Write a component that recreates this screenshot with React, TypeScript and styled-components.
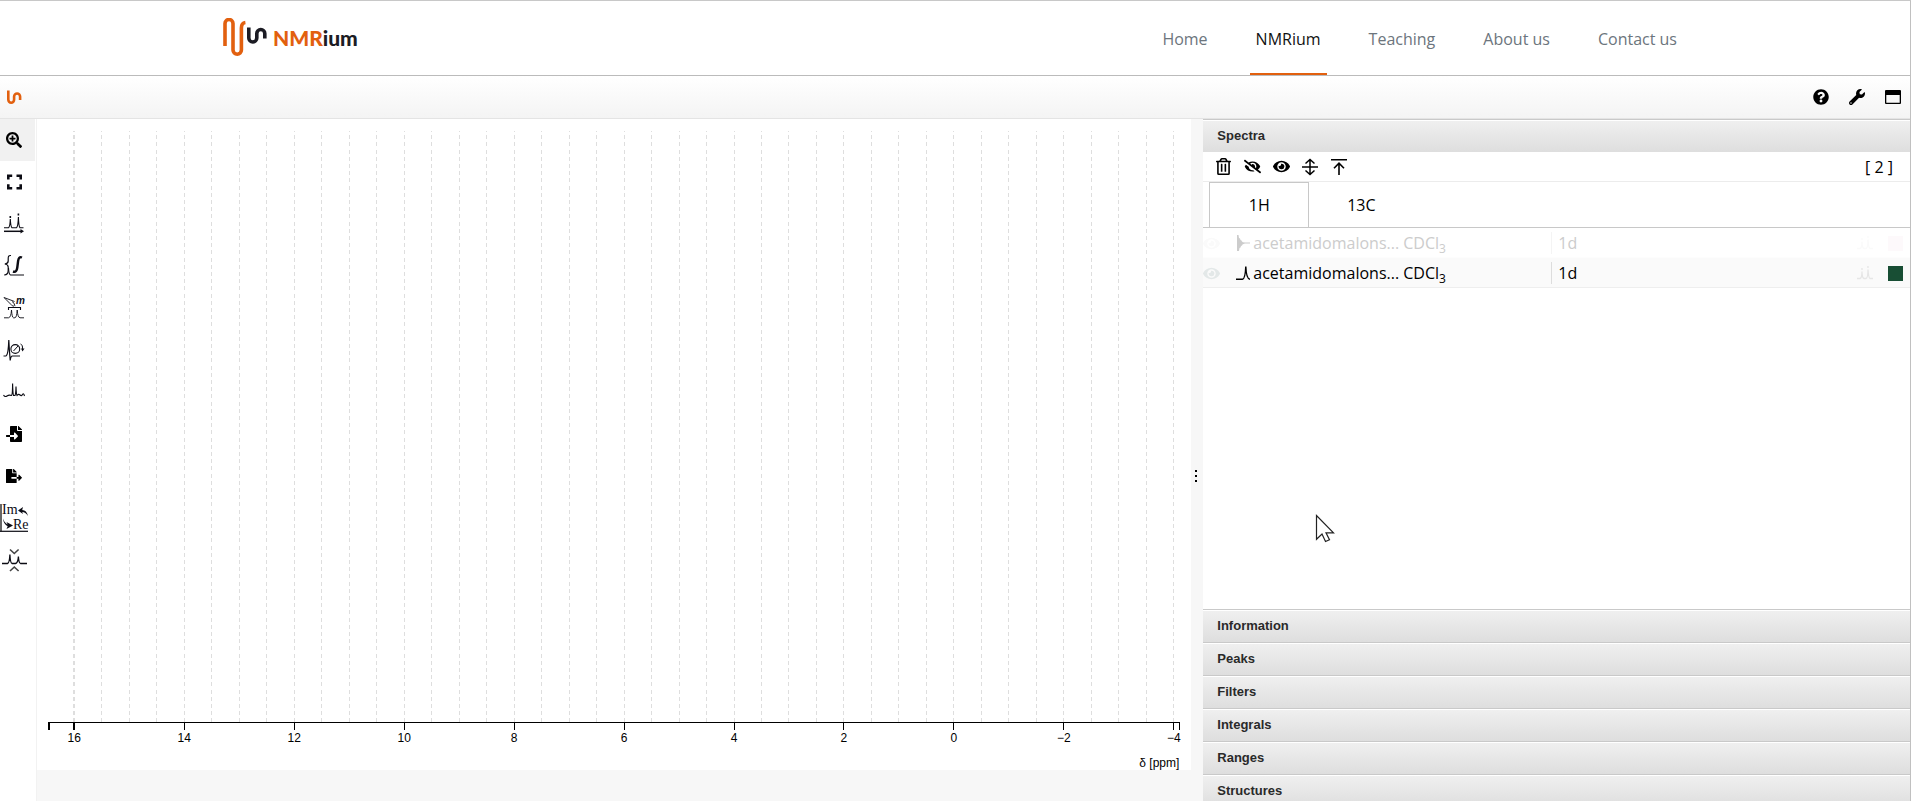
import React, { useState } from "react";
import styled, { createGlobalStyle, css } from "styled-components";
import {
  FaEye,
  FaEyeSlash,
  FaFileExport,
  FaFileImport,
  FaQuestionCircle,
  FaRegTrashAlt,
  FaSearchPlus,
  FaWrench,
} from "react-icons/fa";

const uiFont = `"Segoe UI", "Open Sans", "Noto Sans", sans-serif`;
const sansFont = `Arial, "Liberation Sans", sans-serif`;
const orange = "#e2600f";

const GlobalStyle = createGlobalStyle`
  *, *::before, *::after { box-sizing: border-box; }
  body { margin: 0; background: #fff; color: #000; font-family: ${uiFont}; font-size: 16px; }
  button { margin: 0; padding: 0; border: 0; background: none; color: inherit; font: inherit; cursor: pointer; }
  svg { display: block; }
`;

const Page = styled.div`
  display: flex;
  flex-direction: column;
  height: 100vh;
  overflow: hidden;
  border-top: 1px solid #c8c8c8;
  border-right: 1px solid #c0c0c0;
`;

/* ---------- site header ---------- */

const SiteHeader = styled.header`
  flex: none;
  height: 75px;
  border-bottom: 1px solid #bbb;
`;

const HeaderInner = styled.div`
  display: flex;
  justify-content: space-between;
  height: 100%;
  max-width: 1464px;
  margin: 0 auto;
  padding-right: 4px;
`;

const Brand = styled.a`
  display: flex;
  align-items: center;
  gap: 6px;
  color: #1c1c24;
  text-decoration: none;
`;

const BrandText = styled.span`
  font: 900 21px/24px Lato, sans-serif;
  b {
    font-weight: 900;
    color: ${orange};
  }
`;

const Nav = styled.nav`
  display: flex;
  gap: 36px;
`;

const NavLink = styled.a<{ $active?: boolean }>`
  display: flex;
  align-items: center;
  padding: 3px 6px 0;
  border-bottom: 2px solid ${(p) => (p.$active ? orange : "transparent")};
  color: ${(p) => (p.$active ? "#111" : "#6c757d")};
  text-decoration: none;
`;

/* ---------- application shell ---------- */

const AppBar = styled.div`
  flex: none;
  display: flex;
  align-items: center;
  justify-content: space-between;
  height: 43px;
  padding: 0 9px 0 6px;
  border-bottom: 1px solid #e4e4e4;
  background: linear-gradient(#fff, #f4f4f4);
`;

const BarActions = styled.div`
  display: flex;
  gap: 20px;
`;

const IconButton = styled.button<{ $size?: number }>`
  display: grid;
  place-items: center;
  width: ${(p) => p.$size ?? 16}px;
  height: ${(p) => p.$size ?? 16}px;
`;

const Workspace = styled.main`
  flex: 1;
  min-height: 0;
  display: grid;
  grid-template-columns: 37px minmax(0, 1fr) 12px 37%;
  background: #f7f7f7;
`;

const ToolColumn = styled.div`
  display: flex;
  flex-direction: column;
  background: #fff;
  border-right: 1px solid #f2f2f2;
`;

const ToolButton = styled.button<{ $active?: boolean }>`
  display: flex;
  align-items: center;
  width: 35px;
  height: 42px;
  background: ${(p) => (p.$active ? "#f1f1f1" : "transparent")};
`;

const ToolIcon = styled.span`
  display: grid;
  place-items: center;
  width: 28px;
  height: 28px;
`;

/* ---------- chart ---------- */

const Chart = styled.section`
  display: flex;
  flex-direction: column;
  margin-bottom: 31px;
  padding: 12px 12px 0;
  background: #fff;
`;

const Grid = styled.svg`
  flex: 1;
  width: 100%;
  min-height: 0;
  overflow: visible;
`;

const Axis = styled.svg`
  flex: none;
  width: 100%;
  height: 48px;
  overflow: visible;
  font: 12px ${sansFont};
`;

const Splitter = styled.div`
  display: flex;
  align-items: center;
  padding: 32px 0 0 3px;
`;

/* ---------- side panel ---------- */

const Panel = styled.aside`
  position: relative;
  display: flex;
  flex-direction: column;
  min-width: 0;
  overflow: hidden;
  background: #fff;
`;

const SectionHeader = styled.button`
  flex: none;
  height: 33px;
  padding: 0 14px;
  border-top: 1px solid #c9c9c9;
  box-shadow: inset 0 1px #fff;
  background: linear-gradient(#f0f0f0, #dedede);
  color: #2a2a2a;
  font: bold 13px/16px ${sansFont};
  text-align: left;
`;

const SectionBody = styled.div`
  flex: 1 0 auto;
  min-height: 457px;
`;

const PanelTools = styled.div`
  display: flex;
  align-items: center;
  justify-content: space-between;
  height: 30px;
  padding: 0 17px 0 11px;
  border-bottom: 1px solid #ececec;
`;

const ToolGroup = styled.div`
  display: flex;
  gap: 11px;
`;

const Tabs = styled.div`
  display: flex;
  height: 46px;
  padding-left: 6px;
  border-bottom: 1px solid #c8c8c8;
`;

const Tab = styled.button<{ $active: boolean }>`
  width: 100px;
  border: 1px solid transparent;
  border-bottom: 0;
  ${(p) =>
    p.$active &&
    css`
      border-color: #c8c8c8;
    `}
  & + & {
    margin-left: 2px;
  }
`;

const Table = styled.table`
  width: 100%;
  table-layout: fixed;
  border-collapse: collapse;
`;

const Row = styled.tr<{ $dim?: boolean }>`
  height: 30px;
  background: ${(p) => (p.$dim ? "#fff" : "#fafafa")};
  box-shadow: inset 0 -1px ${(p) => (p.$dim ? "#fdfdfd" : "#eee")};
  color: ${(p) => (p.$dim ? "#ccc" : "#000")};
`;

const Cell = styled.td`
  padding: 0;
  line-height: 22px;
  white-space: nowrap;
`;

const EyeButton = styled(IconButton)<{ $dim?: boolean }>`
  color: ${(p) => (p.$dim ? "#fafafa" : "#e3e8e8")};
`;

const NameContent = styled.div`
  display: flex;
  align-items: center;
  padding-left: 9px;
  gap: 3px;
  sub {
    font-size: 12px;
    line-height: 0;
  }
`;

const Kind = styled.div<{ $dim?: boolean }>`
  padding-left: 6px;
  border-left: 1px solid ${(p) => (p.$dim ? "#f4f4f4" : "#ddd")};
`;

const Swatch = styled.button<{ $color: string }>`
  display: block;
  width: 15px;
  height: 15px;
  background: ${(p) => p.$color};
`;

const Pointer = styled.svg`
  position: absolute;
  left: 112px;
  top: 395px;
  pointer-events: none;
`;

/* ---------- drawings ---------- */

const LogoMark = () => (
  <svg width="44" height="40" viewBox="0 0 44 40" fill="none" strokeWidth="3.6">
    <path
      stroke={orange}
      d="M2 28V5.500a4 4 0 0 1 8 0V32a4.200 4.200 0 0 0 8.400 0V10q0-5 4-5.500"
    />
    <path stroke="#1c1c24" d="M25.800 9.500V20a4 4 0 0 0 8 0v-4.500a4 4 0 0 1 8 0V20.500" />
  </svg>
);

const SmallMark = () => (
  <svg width="16" height="15" viewBox="0 0 16 15" fill="none" stroke={orange} strokeWidth="2.600">
    <path d="M2.300 .500v9a2.900 3.200 0 0 0 5.800 0V6.500a3 3 0 0 1 6 0V10" />
  </svg>
);

type DrawingProps = { children: React.ReactNode; w?: number };
const Drawing = ({ children, w = 1 }: DrawingProps) => (
  <svg width="28" height="28" viewBox="0 0 28 28" fill="none" stroke="#0c0c14" strokeWidth={w} overflow="visible">
    {children}
  </svg>
);

const FullscreenIcon = () => (
  <Drawing w={2.600}>
    <path d="M8.300 11.500V7.700H12.200M16.500 7.700h4.200V11.500M20.700 16.300v3.900H16.500M12.200 20.200H8.300v-3.900" />
  </Drawing>
);

const PeaksIcon = () => (
  <Drawing>
    <path d="M4 17.800H8.500Q10 17 10.300 9Q10.700 17 12 17.800H16.500Q18 17 18.400 7Q18.800 17 20 17.800H23.500" strokeWidth="1.100" />
    <path d="M10.300 6v2M18.400 3.500v2" strokeWidth="1.600" />
    <path d="M4 21.300H22" strokeWidth="1.500" />
    <path d="M20.500 19l3.500 2.300-3.500 2.300z" fill="#0c0c14" stroke="none" />
  </Drawing>
);

const IntegralIcon = () => (
  <Drawing>
    <path d="M11 3.500C8.300 3.300 8.200 4.500 8.200 7v2c0 2-1 2.700-3.400 3 2.400.3 3.400 1 3.400 3v3.500c0 3-.7 4.300-4 4.500" strokeWidth="1.200" />
    <path d="M8.500 16Q8.900 22.500 10.500 23H24" strokeWidth="1.100" />
    <path d="M22 5.500C19.500 4.500 18.600 6 18.100 9l-.8 6.500C16.900 18.500 15.800 20.500 13 19.500" strokeWidth="2.400" />
  </Drawing>
);

const RangesIcon = () => (
  <Drawing w={0.9}>
    <path d="M4 3.500L14.500 7.500M4 3.500L11 10.500Q12 12.200 14 12.200M12 7.500Q14.500 8.500 15 12.200" />
    <text x="16" y="10" fill="#0c0c14" stroke="none" fontFamily="Liberation Sans" fontSize="10" fontWeight="700" fontStyle="italic">m</text>
    <path d="M8.500 16v-2.500H20.500V16" strokeWidth="1.100" />
    <path d="M4 23.800H8.500Q11 23.500 11.500 16Q12 23.500 13.500 23.800H15Q16.700 23.500 17.200 16Q17.700 23.500 20 23.800H24" />
  </Drawing>
);

const PhaseIcon = () => (
  <Drawing>
    <path d="M3.500 20H6Q8.300 19 8.800 4Q9.200 13 10.200 24.500Q10.700 20 12.500 20H20" strokeWidth="1.200" />
    <circle cx="15.300" cy="13" r="4.400" strokeWidth="1.100" />
    <path d="M13.500 15L18 10M20.500 8Q23 8.500 22.600 13" />
    <path d="M21 12.500h3.500l-2 3z" fill="#0c0c14" stroke="none" />
  </Drawing>
);

const BaselineIcon = () => (
  <Drawing>
    <path d="M3.500 17Q5 19.500 7 18T11.500 17.500Q12.500 17 12.600 5.500Q12.900 16 13.500 17.500H15Q15.800 16 16 8.500Q16.300 16.500 17 17.500Q18.500 15.500 20 17T22.500 16.500T24.500 18" strokeWidth="1.100" />
  </Drawing>
);

const ImReIcon = () => (
  <Drawing>
    <path d="M1 0V27.200" strokeWidth="2" stroke="#666" />
    <path d="M0 27.300H28" strokeWidth="1.200" />
    <g fill="#0c0c14" stroke="none" fontFamily="Liberation Serif" fontSize="14">
      <text x="2" y="10">Im</text>
      <text x="13" y="25">Re</text>
      <path d="M18 6.500l5-3.500-.8 3q4.500 0 5.800 6-2.500-4-5.800-4l.8 2z" />
      <path d="M13 21.500l-6.500-3.500 1.200 2.500Q4.500 19 3 14.500q.5 6 4.700 7.700L6.500 25z" />
    </g>
  </Drawing>
);

const SlicingIcon = () => (
  <Drawing>
    <path d="M2 17.500H7.500Q9.500 17 9.900 8.500Q10.300 17 12 17.500H15.500Q18 17 18.400 10.500Q18.800 17 20.500 17.500H27" strokeWidth="1.300" />
    <path d="M10 3.500l4.300 4L18.600 3.500M10 25l4.300-4L18.600 25" strokeWidth="1.600" stroke="#444" />
  </Drawing>
);

const WindowIcon = () => (
  <svg width="16" height="16" viewBox="0 0 16 16">
    <path fillRule="evenodd" d="M1 1h14q1 0 1 1v12q0 1-1 1H1q-1 0-1-1V2q0-1 1-1zM1.300 6v7.700h13.400V6z" />
  </svg>
);

const AlignMiddleIcon = () => (
  <svg width="18" height="18" viewBox="0 0 18 18" fill="none" stroke="#000" strokeWidth="1.500">
    <path d="M1 9h16M9 1.500v15M4.500 5.500l4.500-4 4.500 4M4.500 12.500l4.500 4 4.500-4" />
  </svg>
);

const AlignTopIcon = () => (
  <svg width="18" height="18" viewBox="0 0 18 18" fill="none" stroke="#000" strokeWidth="1.600">
    <path d="M1 1.700h16M9 17V5.500M4 10.200l5-5 5 5" />
  </svg>
);

const FidIcon = () => (
  <svg width="14" height="18" viewBox="0 0 14 18" fill="#ccc">
    <path d="M1 1h1.500l.5 3 1 .5.500 1.500 1 .5.500 1 1 .7L9 8.500h5v1.100H9l-1.500.3-1 .7-.5 1-1 .5-.5 1.500-1 .5-.5 3H1z" />
  </svg>
);

const SpectrumIcon = () => (
  <svg width="14" height="18" viewBox="0 0 14 18" fill="none" stroke="#000" strokeWidth="1.400">
    <path d="M0 15.300H6.500Q9.200 15 9.800 2.500Q10.300 15 14 15.300" />
  </svg>
);

const RowPeaksIcon = ({ color }: { color: string }) => (
  <svg width="16" height="16" viewBox="0 0 16 16" fill="none" stroke={color} strokeWidth="1.300">
    <path d="M0 13.500h3q2-.5 2-7 0 6.500 2 7h2q2-.5 2-9 .500 8.500 2 9h3M5 3v2M11 1v2" />
  </svg>
);

/* ---------- chart content ---------- */

const domainStart = 16.46;
const domainEnd = -4.1;
const position = (ppm: number) =>
  `${(((domainStart - ppm) / (domainStart - domainEnd)) * 100).toFixed(3)}%`;
const gridValues = Array.from({ length: 41 }, (_, i) => 16 - i / 2);
const tickValues = Array.from({ length: 11 }, (_, i) => 16 - i * 2);

const SpectrumChart = () => (
  <Chart aria-label="Spectrum">
    <Grid>
      {gridValues.map((v) => (
        <line
          key={v}
          x1={position(v)}
          x2={position(v)}
          y1="0"
          y2="100%"
          stroke="#dedede"
          strokeWidth={v === 16 ? 2 : 1}
          strokeDasharray="4 3.200"
          strokeDashoffset="3"
          shapeRendering="crispEdges"
        />
      ))}
    </Grid>
    <Axis>
      <g stroke="#000" shapeRendering="crispEdges">
        <line x1="0" x2="100%" y1="0.500" y2="0.500" />
        <line x1="0" x2="0" y1="0" y2="8" strokeWidth="2" />
        <line x1="100%" x2="100%" y1="0" y2="8" />
        {tickValues.map((v) => (
          <line key={v} x1={position(v)} x2={position(v)} y1="0" y2="8" strokeWidth={v === 16 ? 2 : 1} />
        ))}
      </g>
      {tickValues.map((v) => (
        <text key={v} x={position(v)} y="20" textAnchor="middle">
          {v < 0 ? `−${-v}` : v}
        </text>
      ))}
      <text x="100%" y="45" textAnchor="end">
        δ [ppm]
      </text>
    </Axis>
  </Chart>
);

/* ---------- data ---------- */

const navItems = ["Home", "NMRium", "Teaching", "About us", "Contact us"];

const tools = [
  { label: "Zoom", icon: <FaSearchPlus size={16} /> },
  { label: "Full zoom out", icon: <FullscreenIcon /> },
  { label: "Peak picking", icon: <PeaksIcon /> },
  { label: "Integral", icon: <IntegralIcon /> },
  { label: "Ranges picking", icon: <RangesIcon /> },
  { label: "Phase correction", icon: <PhaseIcon /> },
  { label: "Baseline correction", icon: <BaselineIcon /> },
  { label: "Import", icon: <FaFileImport size={16} /> },
  { label: "Export", icon: <FaFileExport size={16} /> },
  { label: "Real / imaginary", icon: <ImReIcon /> },
  { label: "Slicing", icon: <SlicingIcon /> },
];

const spectra = [
  { id: "fid", dim: true, icon: <FidIcon />, color: "#fdf9fb", peaks: "#fafafa" },
  { id: "ft", dim: false, icon: <SpectrumIcon />, color: "#184e34", peaks: "#e6e6e6" },
];

const closedSections = ["Information", "Peaks", "Filters", "Integrals", "Ranges", "Structures"];

export default function App() {
  const [tool, setTool] = useState("Zoom");
  const [nucleus, setNucleus] = useState("1H");

  return (
    <>
      <GlobalStyle />
      <Page>
        <SiteHeader>
          <HeaderInner>
            <Brand href="#" aria-label="NMRium">
              <LogoMark />
              <BrandText>
                <b>NMR</b>ium
              </BrandText>
            </Brand>
            <Nav>
              {navItems.map((item) => (
                <NavLink key={item} href="#" $active={item === "NMRium"}>
                  {item}
                </NavLink>
              ))}
            </Nav>
          </HeaderInner>
        </SiteHeader>

        <AppBar>
          <IconButton aria-label="About NMRium">
            <SmallMark />
          </IconButton>
          <BarActions>
            <IconButton aria-label="Help">
              <FaQuestionCircle size={16} />
            </IconButton>
            <IconButton aria-label="Settings">
              <FaWrench size={16} />
            </IconButton>
            <IconButton aria-label="Full screen">
              <WindowIcon />
            </IconButton>
          </BarActions>
        </AppBar>

        <Workspace>
          <ToolColumn>
            {tools.map((t) => (
              <ToolButton
                key={t.label}
                aria-label={t.label}
                $active={tool === t.label}
                onClick={() => setTool(t.label)}
              >
                <ToolIcon>{t.icon}</ToolIcon>
              </ToolButton>
            ))}
          </ToolColumn>

          <SpectrumChart />

          <Splitter>
            <svg width="4" height="14" viewBox="0 0 4 14">
              <path d="M1 1h2v2H1zM1 6h2v2H1zM1 11h2v2H1z" />
            </svg>
          </Splitter>

          <Panel>
            <SectionHeader>Spectra</SectionHeader>
            <SectionBody>
              <PanelTools>
                <ToolGroup>
                  <IconButton $size={18} aria-label="Delete">
                    <FaRegTrashAlt size={17} />
                  </IconButton>
                  <IconButton $size={18} aria-label="Hide all">
                    <FaEyeSlash size={17} />
                  </IconButton>
                  <IconButton $size={18} aria-label="Show all">
                    <FaEye size={17} />
                  </IconButton>
                  <IconButton $size={18} aria-label="Center spectra">
                    <AlignMiddleIcon />
                  </IconButton>
                  <IconButton $size={18} aria-label="Align spectra">
                    <AlignTopIcon />
                  </IconButton>
                </ToolGroup>
                <span>[ 2 ]</span>
              </PanelTools>
              <Tabs role="tablist">
                {["1H", "13C"].map((n) => (
                  <Tab
                    key={n}
                    role="tab"
                    aria-selected={nucleus === n}
                    $active={nucleus === n}
                    onClick={() => setNucleus(n)}
                  >
                    {n}
                  </Tab>
                ))}
              </Tabs>
              <Table>
                <colgroup>
                  <col width="24" />
                  <col width="324" />
                  <col />
                  <col width="31" />
                  <col width="22" />
                </colgroup>
                <tbody>
                  {spectra.map((s) => (
                    <Row key={s.id} $dim={s.dim}>
                      <Cell>
                        <EyeButton $dim={s.dim} aria-label="Toggle visibility">
                          <FaEye size={17} />
                        </EyeButton>
                      </Cell>
                      <Cell>
                        <NameContent>
                          {s.icon}
                          <span>
                            acetamidomalons... CDCl<sub>3</sub>
                          </span>
                        </NameContent>
                      </Cell>
                      <Cell>
                        <Kind $dim={s.dim}>1d</Kind>
                      </Cell>
                      <Cell>
                        <RowPeaksIcon color={s.peaks} />
                      </Cell>
                      <Cell>
                        <Swatch $color={s.color} aria-label="Change colour" />
                      </Cell>
                    </Row>
                  ))}
                </tbody>
              </Table>
            </SectionBody>
            {closedSections.map((title) => (
              <SectionHeader key={title}>{title}</SectionHeader>
            ))}
            <Pointer width="20" height="30" viewBox="0 0 20 30" fill="#fff" stroke="#222" strokeWidth="1.200">
              <path d="M1.500 1.500V25.300L7 20l3.500 7.500 4-1.800L11 18.800h7.500z" />
            </Pointer>
          </Panel>
        </Workspace>
      </Page>
    </>
  );
}
